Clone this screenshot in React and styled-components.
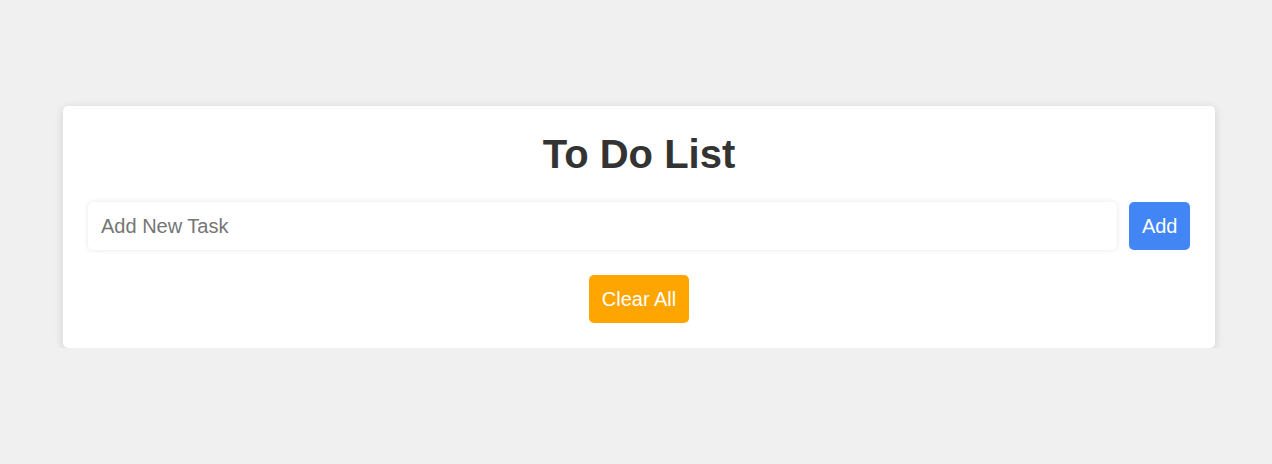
import React, { useState } from 'react';
import styled, { createGlobalStyle } from 'styled-components';

const GlobalStyle = createGlobalStyle`
  * { box-sizing: border-box; }
  body {
    margin: 0;
    background-color: #f0f0f0;
    font-family: "Liberation Sans", Arial, sans-serif;
  }
`;

const Page = styled.div`
  padding: 106px 57px 0 63px;
`;

const Card = styled.div`
  background: #fff;
  border-radius: 5px;
  box-shadow: 0 2px 10px rgba(0, 0, 0, 0.14);
  padding: 25px;
  display: flex;
  flex-direction: column;
  gap: 25px;
`;

const Title = styled.h1`
  margin: 0;
  text-align: center;
  font-size: 40px;
  line-height: 46px;
  font-weight: bold;
  color: #333;
`;

const Row = styled.div`
  display: flex;
  gap: 12px;
`;

const TaskInput = styled.input`
  flex: 1;
  height: 48px;
  border: none;
  border-radius: 5px;
  box-shadow: 0 0 5px rgba(0, 0, 0, 0.1);
  padding: 0 13px;
  font-family: inherit;
  font-size: 20px;
  color: #333;
  outline: none;
  &::placeholder { color: #757575; }
`;

const Button = styled.button`
  height: 48px;
  padding: 0 12.5px;
  border: none;
  border-radius: 5px;
  background: ${p => p.bg};
  color: #fff;
  font-family: inherit;
  font-size: 20px;
  cursor: pointer;
`;

const Footer = styled.div`
  display: flex;
  justify-content: center;
`;

const App = () => {
  const [task, setTask] = useState('');
  const [tasks, setTasks] = useState([]);

  const addTask = () => {
    if (!task.trim()) return;
    setTasks([...tasks, task]);
    setTask('');
  };

  return (
    <>
      <GlobalStyle />
      <Page>
        <Card>
          <Title>To Do List</Title>
          <Row>
            <TaskInput
              placeholder="Add New Task"
              value={task}
              onChange={e => setTask(e.target.value)}
            />
            <Button bg="#4285f4" onClick={addTask}>Add</Button>
          </Row>
          <Footer>
            <Button bg="#ffa500" onClick={() => setTasks([])}>Clear All</Button>
          </Footer>
        </Card>
      </Page>
    </>
  );
};

export default App;
